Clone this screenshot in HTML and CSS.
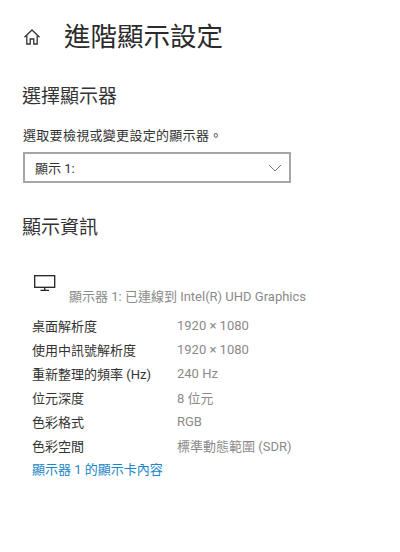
FILE: index.html
```html
<!DOCTYPE html>
<html lang="zh-Hant">
<head>
    <meta charset="UTF-8">
    <meta name="viewport" content="width=device-width, initial-scale=1.0">
    <title>進階顯示設定</title>
    <link rel="stylesheet" href="styles.css">
</head>
<body>
    <div class="page-header">
        <svg class="home-icon" width="18" height="18" viewBox="0 0 18 18" fill="none" stroke="#333" stroke-width="1.3">
            <path d="M1.5 9.2 9 2l7.500 7.200"/>
            <path d="M3.800 7.500V16h3.400v-5h3.600v5h3.400V7.500"/>
        </svg>
        <h1 class="page-title">進階顯示設定</h1>
    </div>

    <h2 class="section-title choose-title">選擇顯示器</h2>
    <p class="choose-label">選取要檢視或變更設定的顯示器。</p>
    <div class="display-select">
        <span>顯示 1:</span>
        <svg width="14" height="8" viewBox="0 0 14 8" fill="none" stroke="#777" stroke-width="1">
            <path d="M1 1l6 6 6-6"/>
        </svg>
    </div>

    <h2 class="section-title info-title">顯示資訊</h2>

    <div class="monitor-row">
        <svg class="monitor-icon" width="24" height="18" viewBox="0 0 24 18" fill="none" stroke="#222" stroke-width="1.300">
            <rect x="1.700" y="1.700" width="20" height="11.600"/>
            <path d="M11.700 13.500v2.500M7.500 16.300h8.500"/>
        </svg>
        <span class="monitor-name">顯示器 1: 已連線到 Intel(R) UHD Graphics</span>
    </div>

    <div class="info-table">
        <div class="info-row"><span>桌面解析度</span><span class="info-value">1920 × 1080</span></div>
        <div class="info-row"><span>使用中訊號解析度</span><span class="info-value">1920 × 1080</span></div>
        <div class="info-row"><span>重新整理的頻率 (Hz)</span><span class="info-value">240 Hz</span></div>
        <div class="info-row"><span>位元深度</span><span class="info-value">8 位元</span></div>
        <div class="info-row"><span>色彩格式</span><span class="info-value">RGB</span></div>
        <div class="info-row"><span>色彩空間</span><span class="info-value">標準動態範圍 (SDR)</span></div>
    </div>
    <a href="#" class="adapter-link">顯示器 1 的顯示卡內容</a>
</body>
</html>
```

FILE: styles.css
```css
body {
    font-family: Roboto, "Noto Sans CJK TC", sans-serif;
    margin: 0;
    padding: 0 0 0 23px;
    background-color: #fff;
    color: #333;
    font-size: 13px;
}
.page-header {
    display: flex;
    align-items: center;
    padding-top: 21px;
    height: 32px;
}
.home-icon {
    margin-right: 23px;
}
.page-title {
    margin: 0;
    font-size: 26.5px;
    font-weight: 400;
    line-height: 32px;
    color: #2b2b2b;
}
.section-title {
    margin: 0 0 0 -1px;
    font-size: 19px;
    font-weight: 400;
    line-height: 24px;
    color: #333;
}
.choose-title {
    margin-top: 32px;
}
.choose-label {
    margin: 18px 0 0;
    line-height: 18px;
    letter-spacing: 0.3px;
}
.display-select {
    display: flex;
    justify-content: space-between;
    align-items: center;
    box-sizing: border-box;
    width: 268px;
    height: 31px;
    margin-top: 7px;
    padding: 0 7px 0 10px;
    border: 2px solid #a6a6a6;
}
.info-title {
    margin-top: 33px;
}
.monitor-row {
    display: flex;
    align-items: flex-end;
    margin: 34px 0 0 10px;
}
.monitor-icon {
    margin-bottom: 14px;
}
.monitor-name {
    margin-left: 12px;
    color: #8a8a8a;
    line-height: 18px;
}
.info-table {
    margin: 7px 0 0 9px;
}
.info-row {
    display: flex;
    height: 24px;
    align-items: center;
}
.info-row span:first-child {
    width: 145px;
}
.info-value {
    color: #8a8a8a;
}
.adapter-link {
    display: block;
    margin: 1px 0 0 9px;
    line-height: 24px;
    color: #1a86c8;
    text-decoration: none;
}
```
